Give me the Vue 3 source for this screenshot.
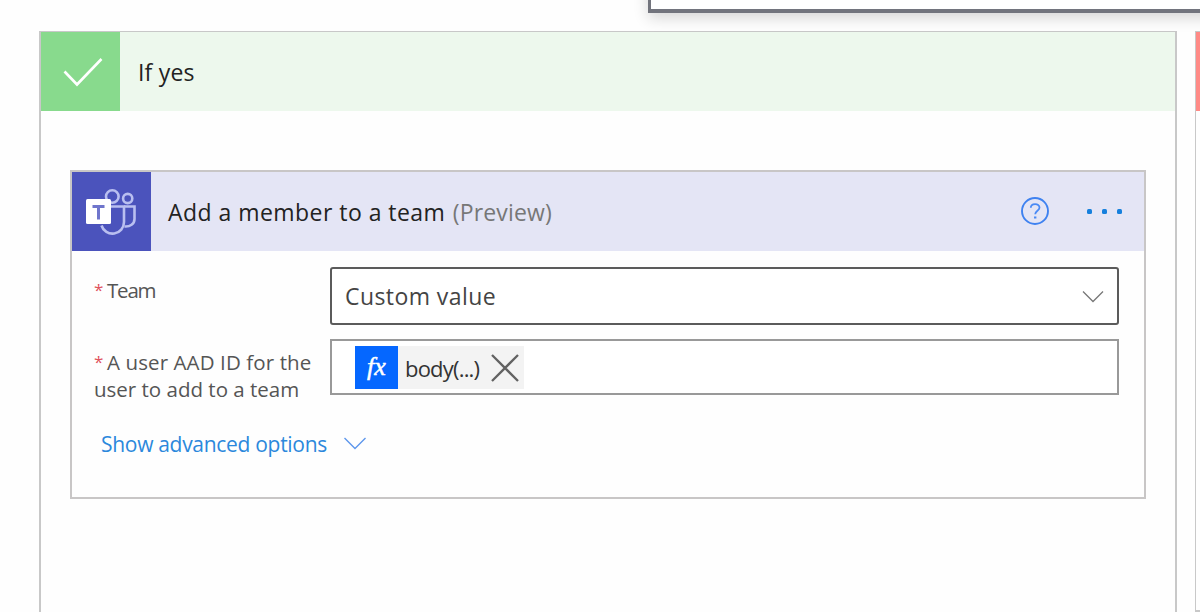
<script setup>
const dots = [0, 1, 2]
</script>

<template>
  <main class="canvas">
    <section class="branch yes">
      <header class="branch-head">
        <span class="branch-icon">
          <svg width="79" height="79" viewBox="0 0 79 79"><path d="M23.5 39.5 36 52.5 60.5 27" fill="none" stroke="#fff" stroke-width="2.6" /></svg>
        </span>
        <span class="branch-title">If yes</span>
      </header>

      <article class="card">
        <header class="card-head">
          <span class="card-icon">
            <svg width="79" height="79" viewBox="0 0 79 79">
              <g fill="none" stroke="#b9bff0" stroke-width="2.6">
                <circle cx="40.300" cy="24.500" r="6.300" />
                <circle cx="55.700" cy="26.500" r="4.600" />
                <path d="M38 34.500h14v15.500a11.500 11.500 0 0 1-22.500 3.500" />
                <path d="M52 34.500h10.500V47c0 5-4.500 8-10 7.500" />
              </g>
              <rect x="14" y="27" width="25" height="25" rx="1.500" fill="#fff" />
              <path d="M20.500 34.500h12M26.500 34.500v13" fill="none" stroke="#6f75cc" stroke-width="3" />
            </svg>
          </span>
          <h1 class="card-title">Add a member to a team <span class="preview">(Preview)</span></h1>
          <svg class="help" width="30" height="30" viewBox="0 0 30 30">
            <circle cx="15" cy="15" r="13" fill="none" stroke="#3f82f0" stroke-width="1.900" />
            <path d="M10.800 11.800c0-4.900 8.700-4.900 8.700-.3 0 3.300-4.300 3.100-4.300 6.800" fill="none" stroke="#4a8af5" stroke-width="1.800" />
            <rect x="14" y="20.500" width="2.400" height="2" fill="#4a8af5" />
          </svg>
          <span class="more"><i v-for="d in dots" :key="d"></i></span>
        </header>

        <div class="fields">
          <div class="row team">
            <label class="label"><span class="star">*</span><span class="l1">Team</span></label>
            <div class="select">
              <span class="select-text">Custom value</span>
              <svg width="22" height="14" viewBox="0 0 22 14"><path d="m1 2.500 10 10 10-10" fill="none" stroke="#777" stroke-width="1.300" /></svg>
            </div>
          </div>
          <div class="row user">
            <label class="label"><span class="star">*</span><span class="l2">A user AAD ID for the</span><br /><span class="l3">user to add to a team</span></label>
            <div class="input">
              <span class="token">
                <span class="fx">fx</span>
                <span class="token-text">body(...)</span>
                <svg width="28" height="28" viewBox="0 0 28 28"><path d="m1 1 26 26M27 1 1 27" fill="none" stroke="#626262" stroke-width="2.300" /></svg>
              </span>
            </div>
          </div>
          <div class="advanced">
            <span>Show advanced options</span>
            <svg width="22" height="13" viewBox="0 0 22 13"><path d="m.5 1 10.500 10.500L21.500 1" fill="none" stroke="#5e97ec" stroke-width="1.400" /></svg>
          </div>
        </div>
      </article>
    </section>

    <section class="branch no"><div class="no-head"></div></section>
    <div class="popup"></div>
  </main>
</template>

<style>
body { background: #fff; overflow: hidden; }
</style>

<style scoped>
* { box-sizing: border-box; }
.canvas {
  position: relative;
  display: flex;
  gap: 18px;
  width: 1200px;
  height: 612px;
  padding: 31px 0 0 39px;
  overflow: hidden;
  background: #fefefe;
  font-family: "Open Sans", "Noto Sans", sans-serif;
  color: #222;
}
.branch { flex: none; border: 2px solid #c8c8c8; border-top-width: 1px; background: #fefefe; }
.yes { width: 1138px; height: 600px; }
.no { width: 300px; height: 581px; border-left-width: 1px; }
.no-head { height: 79px; background: #ff8a86; }
.branch-head { display: flex; align-items: center; height: 79px; background: #edf8ed; }
.branch-icon { width: 79px; height: 79px; background: #88da8d; }
.branch-title { margin-left: 18px; font-size: 23px; letter-spacing: 0.2px; line-height: 32px; }
svg { display: block; flex: none; }
.card { width: 1076px; height: 329px; margin: 59px 0 0 29px; border: 2px solid #c8c6c6; background: #fefefe; }
.card-head { display: flex; align-items: center; height: 79px; background: #e4e5f5; }
.card-icon { width: 79px; height: 79px; background: #4b53bc; }
.card-title { flex: 1; margin: 0 0 0 17px; font-size: 23px; font-weight: 400; line-height: 32px; letter-spacing: 0.46px; white-space: nowrap; }
.preview { margin-left: 1px; color: #777; letter-spacing: 0.15px; }
.help { margin: -2px 38px 0 0; }
.more { display: flex; gap: 10px; margin: 0 22px 0 0; }
.more { gap: 10px; margin-right: 22.5px; }
.help { margin-right: 36.5px; }
.more i { width: 5px; height: 5px; border-radius: 1.5px; background: #1680dd; }
.fields { padding: 16px 25px 0 22px; }
.row { display: flex; justify-content: space-between; }
.label { font-size: 20.5px; line-height: 27px; color: #555; white-space: nowrap; }
.team .label { padding-top: 10px; }
.user { margin-top: 14px; }
.user .label { padding-top: 10px; }
.l1 { letter-spacing: -1.2px; }
.l2 { letter-spacing: 0.1px; }
.star { display: inline-block; width: 13px; color: #e0525c; font-size: 17px; line-height: 20px; vertical-align: 2px; }
.select, .input { display: flex; align-items: center; width: 789px; border: 2px solid #999; background: #fff; }
.select { height: 58px; padding: 0 13px; justify-content: space-between; border-color: #5b5b5b; border-radius: 3px; }
.select-text { font-size: 23px; letter-spacing: 0.42px; color: #444; }
.input { height: 56px; padding-left: 23px; }
.token { display: flex; align-items: center; width: 169px; height: 43px; background: #f3f3f3; color: #333; }
.token svg { margin-top: 1px; }
.fx { width: 43px; height: 43px; background: #0567ff; color: #fff; text-align: center; font: italic 26px/41px "Liberation Serif", serif; -webkit-text-stroke: 0.5px #fff; }
.token-text { width: 76px; margin: 2px 10px 0 7px; font-size: 22px; letter-spacing: -0.8px; white-space: nowrap; }
.advanced { display: flex; align-items: center; gap: 17px; margin: 26px 0 0 7px; font-size: 21px; line-height: 30px; letter-spacing: -0.3px; color: #2b88dc; }
.advanced svg { margin-top: -2px; }
.popup {
  position: absolute;
  left: 648px;
  top: -40px;
  width: 600px;
  height: 53px;
  border: 4px solid #72747d;
  border-left-width: 3px;
  background: #fff;
  box-shadow: 0 5px 14px rgba(0, 0, 0, 0.16);
}
</style>
